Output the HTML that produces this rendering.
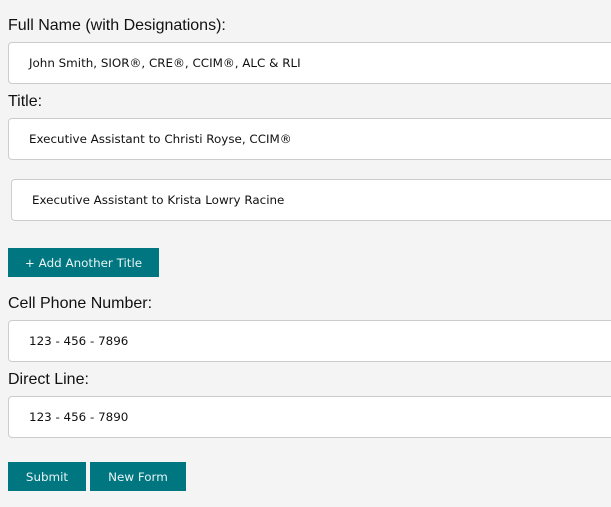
<!DOCTYPE html>
<html><head><style>
body{margin:0;background:#f4f4f4;width:611px;height:507px;overflow:hidden;position:relative;font-family:"Liberation Sans",Arial,sans-serif}
.l{position:absolute;left:8px;font-size:16px;color:#111;line-height:18px}
.i{position:absolute;left:8px;width:620px;background:#fff;border:1px solid #ccc;border-radius:4px;box-sizing:border-box;height:42px;font-family:"DejaVu Sans",Verdana,sans-serif;font-size:11.9px;color:#111;line-height:41px;padding-left:20px}
.b{position:absolute;background:#007680;color:#e8f4f4;font-family:"DejaVu Sans",Verdana,sans-serif;font-size:11.9px;text-align:center;line-height:31px;height:29px;top:462px}
</style></head><body>
<div class="l" style="top:17px">Full Name (with Designations):</div>
<div class="i" style="top:42px">John Smith, SIOR®, CRE®, CCIM®, ALC &amp; RLI</div>
<div class="l" style="top:93px">Title:</div>
<div class="i" style="top:118px">Executive Assistant to Christi Royse, CCIM®</div>
<div class="i" style="top:179px;left:11px">Executive Assistant to Krista Lowry Racine</div>
<div class="b" style="left:8px;top:248px;width:151px">+ Add Another Title</div>
<div class="l" style="top:295px">Cell Phone Number:</div>
<div class="i" style="top:320px">123 - 456 - 7896</div>
<div class="l" style="top:371px">Direct Line:</div>
<div class="i" style="top:396px">123 - 456 - 7890</div>
<div class="b" style="left:8px;width:78px">Submit</div>
<div class="b" style="left:90px;width:96px">New Form</div>
</body></html>
